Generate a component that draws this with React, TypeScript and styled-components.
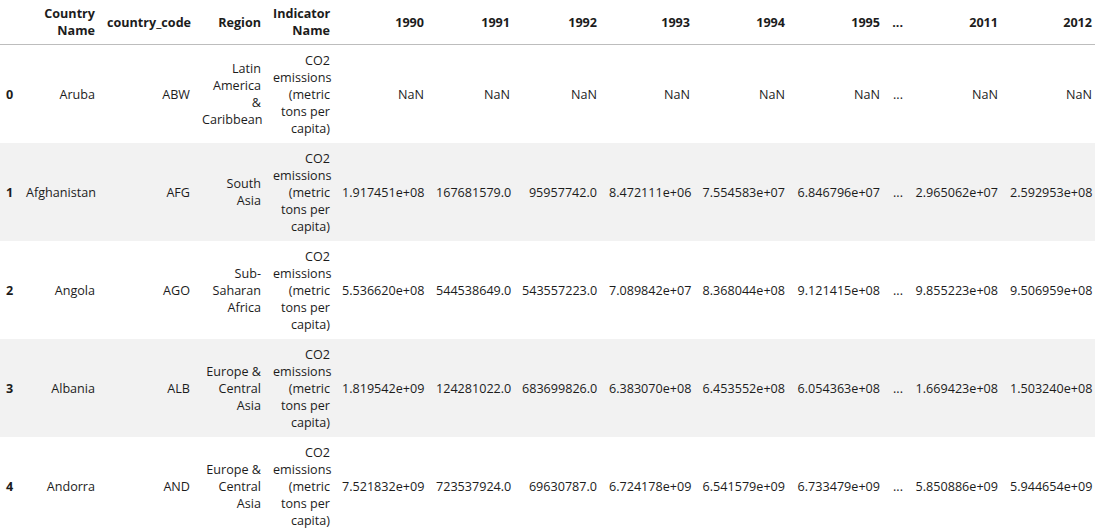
import React from "react";
import styled, { createGlobalStyle } from "styled-components";

const Global = createGlobalStyle`
  html, body { margin: 0; padding: 0; background: #ffffff; overflow: hidden; }
  body { font-family: "Open Sans", "Noto Sans", "Liberation Sans", sans-serif; }
`;

const Table = styled.table`
  border-collapse: collapse;
  table-layout: fixed;
  width: 1098px;
  font-size: 12.6px;
  line-height: 17px;
  color: #1c1c1c;
`;

const HeadCell = styled.th<{ $left?: boolean }>`
  height: 44px;
  padding: 0 6px;
  text-align: ${(p) => (p.$left ? "left" : "right")};
  vertical-align: middle;
  font-weight: 700;
  border-bottom: 1px solid #bdbdbd;
  white-space: nowrap;
`;

const Row = styled.tr<{ $striped: boolean }>`
  background: ${(p) => (p.$striped ? "#f2f2f2" : "#ffffff")};
`;

const IndexCell = styled.th`
  height: 98px;
  padding: 0 6px;
  text-align: left;
  vertical-align: middle;
  font-weight: 700;
`;

const Cell = styled.td`
  height: 98px;
  padding: 0 6px;
  text-align: right;
  vertical-align: middle;
  white-space: nowrap;
`;

const Line = styled.span`
  display: block;
`;

const cols = [20, 81, 95, 71, 69, 94, 86, 87, 93, 95, 95, 23, 95, 94];

const headers: string[][] = [
  [""],
  ["Country", "Name"],
  ["country_code"],
  ["Region"],
  ["Indicator", "Name"],
  ["1990"],
  ["1991"],
  ["1992"],
  ["1993"],
  ["1994"],
  ["1995"],
  ["..."],
  ["2011"],
  ["2012"],
];

const indicator = ["CO2", "emissions", "(metric", "tons per", "capita)"];

type RowData = {
  name: string;
  code: string;
  region: string[];
  values: string[];
};

const rows: RowData[] = [
  {
    name: "Aruba",
    code: "ABW",
    region: ["Latin", "America", "&", "Caribbean"],
    values: ["NaN", "NaN", "NaN", "NaN", "NaN", "NaN", "...", "NaN", "NaN"],
  },
  {
    name: "Afghanistan",
    code: "AFG",
    region: ["South", "Asia"],
    values: ["1.917451e+08", "167681579.0", "95957742.0", "8.472111e+06", "7.554583e+07", "6.846796e+07", "...", "2.965062e+07", "2.592953e+08"],
  },
  {
    name: "Angola",
    code: "AGO",
    region: ["Sub-", "Saharan", "Africa"],
    values: ["5.536620e+08", "544538649.0", "543557223.0", "7.089842e+07", "8.368044e+08", "9.121415e+08", "...", "9.855223e+08", "9.506959e+08"],
  },
  {
    name: "Albania",
    code: "ALB",
    region: ["Europe &", "Central", "Asia"],
    values: ["1.819542e+09", "124281022.0", "683699826.0", "6.383070e+08", "6.453552e+08", "6.054363e+08", "...", "1.669423e+08", "1.503240e+08"],
  },
  {
    name: "Andorra",
    code: "AND",
    region: ["Europe &", "Central", "Asia"],
    values: ["7.521832e+09", "723537924.0", "69630787.0", "6.724178e+09", "6.541579e+09", "6.733479e+09", "...", "5.850886e+09", "5.944654e+09"],
  },
];

const Lines = ({ lines }: { lines: string[] }) => (
  <>
    {lines.map((l, i) => (
      <Line key={i}>{l}</Line>
    ))}
  </>
);

export default function App() {
  return (
    <>
      <Global />
      <Table>
        <colgroup>
          {cols.map((w, i) => (
            <col key={i} style={{ width: w }} />
          ))}
        </colgroup>
        <thead>
          <tr>
            {headers.map((h, i) => (
              <HeadCell key={i} $left={i === 0}>
                <Lines lines={h} />
              </HeadCell>
            ))}
          </tr>
        </thead>
        <tbody>
          {rows.map((r, i) => (
            <Row key={i} $striped={i % 2 === 1}>
              <IndexCell>{i}</IndexCell>
              <Cell>{r.name}</Cell>
              <Cell>{r.code}</Cell>
              <Cell>
                <Lines lines={r.region} />
              </Cell>
              <Cell>
                <Lines lines={indicator} />
              </Cell>
              {r.values.map((v, j) => (
                <Cell key={j}>{v}</Cell>
              ))}
            </Row>
          ))}
        </tbody>
      </Table>
    </>
  );
}
